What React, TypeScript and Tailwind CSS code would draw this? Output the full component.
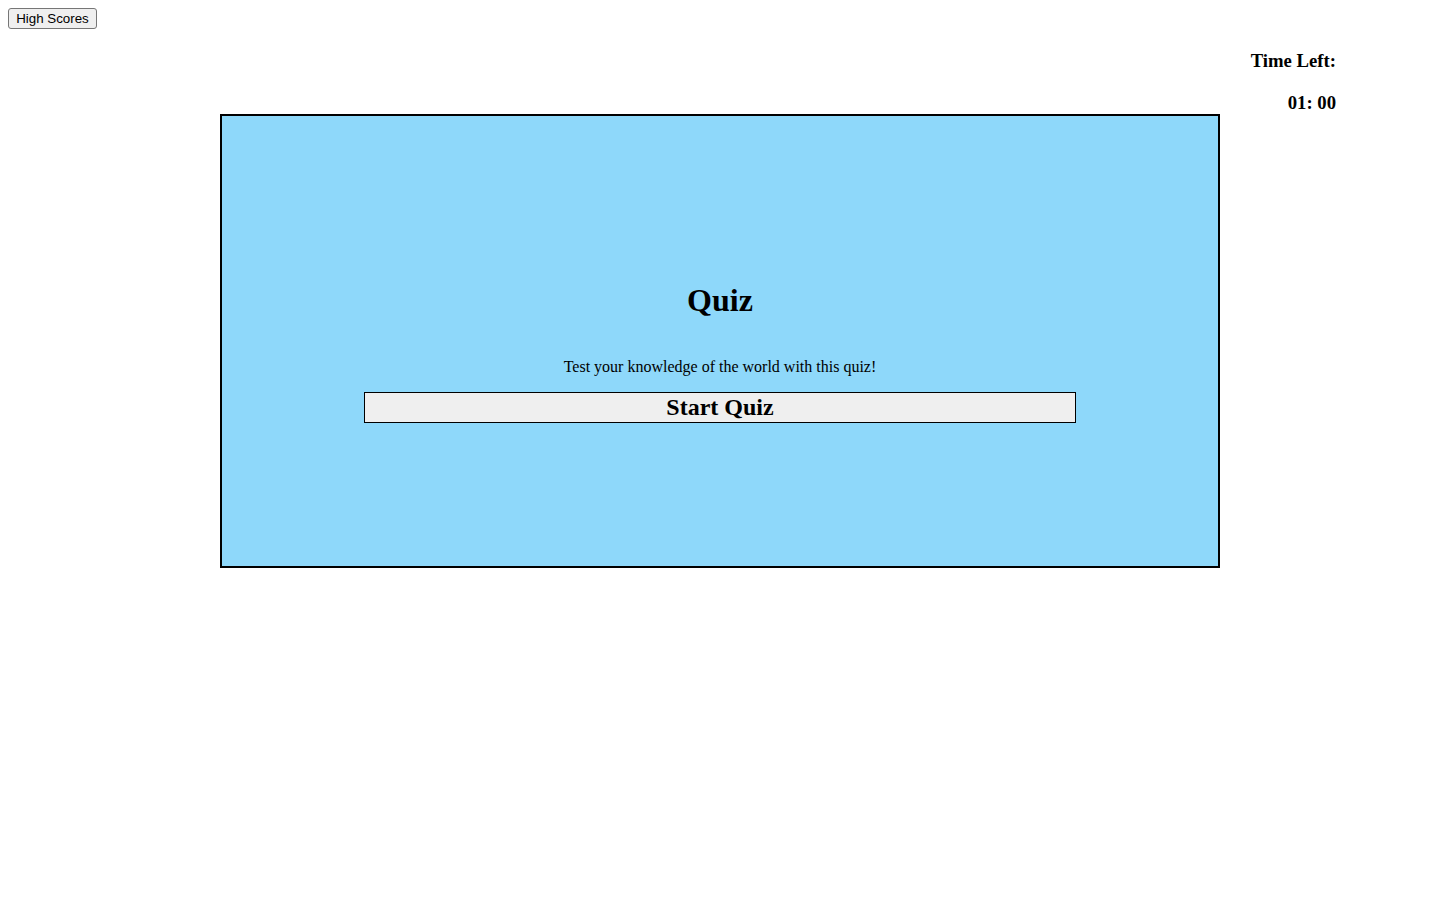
export default function App() {
  return (
    <div className="min-h-[900px] w-[1440px] bg-white text-black" style={{ fontFamily: '"Liberation Serif", "Times New Roman", serif' }}>
      <div className="pl-[8px] pt-[8px]">
        <button
          className="flex h-[21px] w-[89px] items-center justify-center rounded-[3px] border border-[#767676] bg-[#efefef] text-[13.33px] leading-none text-black"
          style={{ fontFamily: '"Liberation Sans", Arial, sans-serif' }}
        >
          High Scores
        </button>
      </div>
      <div className="flex flex-col items-end pr-[104px] pt-[21px]">
        <h3 className="text-[18.72px] font-bold leading-[22px]">Time Left:</h3>
        <h3 className="mt-[20px] text-[18.72px] font-bold leading-[22px]">01: 00</h3>
      </div>
      <div className="ml-[220px] flex h-[454px] w-[1000px] flex-col items-center border-2 border-black bg-[#8ed8fa] pt-[166px]">
        <h1 className="text-[32px] font-bold leading-[37px]">Quiz</h1>
        <p className="mt-[39px] text-[16px] leading-[18px]">Test your knowledge of the world with this quiz!</p>
        <button className="mt-[16px] flex h-[31px] w-[712px] items-center justify-center border border-black bg-[#efefef] pb-[2px] text-[24px] font-bold leading-none">
          Start Quiz
        </button>
      </div>
    </div>
  );
}
